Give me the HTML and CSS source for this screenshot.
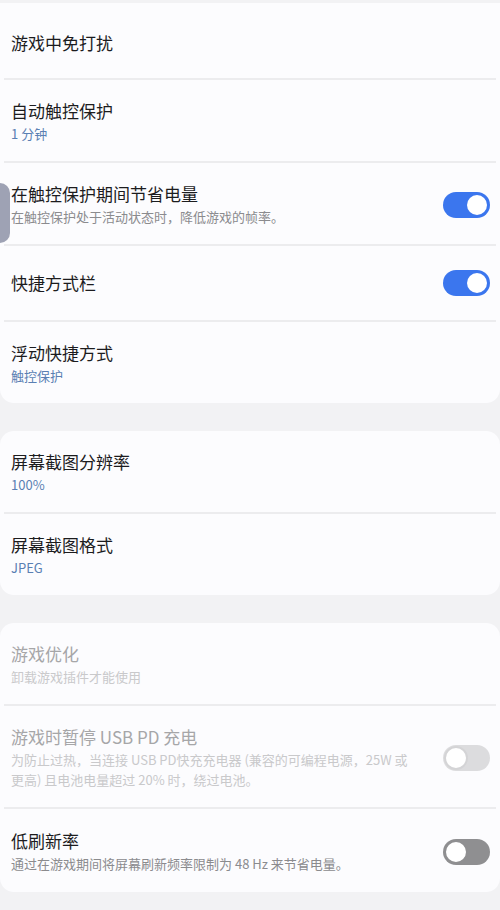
FILE: index.html
```html
<!DOCTYPE html>
<html lang="zh-CN">
<head>
    <meta charset="UTF-8">
    <title>游戏设置</title>
    <link rel="stylesheet" href="styles.css">
</head>
<body>
    <div class="edge-handle"></div>

    <div class="card first">
        <div class="row single top">
            <div class="text">
                <div class="title">游戏中免打扰</div>
            </div>
        </div>
        <div class="row">
            <div class="text">
                <div class="title">自动触控保护</div>
                <div class="sub value">1 分钟</div>
            </div>
        </div>
        <div class="row">
            <div class="text">
                <div class="title">在触控保护期间节省电量</div>
                <div class="sub">在触控保护处于活动状态时，降低游戏的帧率。</div>
            </div>
            <div class="switch on"><span class="knob"></span></div>
        </div>
        <div class="row single">
            <div class="text">
                <div class="title">快捷方式栏</div>
            </div>
            <div class="switch on"><span class="knob"></span></div>
        </div>
        <div class="row">
            <div class="text">
                <div class="title">浮动快捷方式</div>
                <div class="sub value">触控保护</div>
            </div>
        </div>
    </div>

    <div class="card">
        <div class="row">
            <div class="text">
                <div class="title">屏幕截图分辨率</div>
                <div class="sub value">100%</div>
            </div>
        </div>
        <div class="row">
            <div class="text">
                <div class="title">屏幕截图格式</div>
                <div class="sub value">JPEG</div>
            </div>
        </div>
    </div>

    <div class="card">
        <div class="row disabled">
            <div class="text">
                <div class="title">游戏优化</div>
                <div class="sub">卸载游戏插件才能使用</div>
            </div>
        </div>
        <div class="row disabled">
            <div class="text">
                <div class="title">游戏时暂停 USB PD 充电</div>
                <div class="sub">为防止过热，当连接 USB PD快充充电器 (兼容的可编程电源，25W 或更高) 且电池电量超过 20% 时，绕过电池。</div>
            </div>
            <div class="switch off"><span class="knob"></span></div>
        </div>
        <div class="row">
            <div class="text">
                <div class="title">低刷新率</div>
                <div class="sub">通过在游戏期间将屏幕刷新频率限制为 48 Hz 来节省电量。</div>
            </div>
            <div class="switch off"><span class="knob"></span></div>
        </div>
    </div>
</body>
</html>
```

FILE: styles.css
```css
body {
    margin: 0;
    padding: 3px 0 0;
    background: #f2f2f4;
    font-family: "Noto Sans CJK SC", "Noto Sans", sans-serif;
    color: #1c1c1e;
    position: relative;
}
.edge-handle {
    position: absolute;
    left: 0;
    top: 183px;
    width: 10px;
    height: 60px;
    background: #9ea2b4;
    border-radius: 0 10px 10px 0;
}
.card {
    background: #fcfcfe;
    border-radius: 14px;
    margin-bottom: 28px;
    padding: 0 4px;
}
.card.first {
    border-radius: 0 0 14px 14px;
}
.row {
    display: flex;
    align-items: center;
    padding: 19px 6px 17px 7px;
    border-bottom: 2px solid #ececee;
}
.row:last-child {
    border-bottom: none;
}
.row.single {
    padding-top: 24px;
    padding-bottom: 24px;
}
.row.single.top {
    padding-top: 28px;
    padding-bottom: 23px;
}
.card:last-child .row:last-child {
    padding-top: 20px;
    padding-bottom: 18px;
}
.text {
    flex: 1;
    padding-right: 30px;
}
.title {
    font-size: 17px;
    line-height: 24px;
}
.sub {
    font-size: 13px;
    line-height: 20px;
    margin-top: 1px;
    color: #8b8b8e;
}
.sub.value {
    color: #5a7fb3;
}
.disabled .title {
    color: #a6a6a8;
}
.disabled .sub {
    color: #c9c9cb;
}
.switch {
    width: 47px;
    height: 26px;
    border-radius: 13px;
    box-sizing: border-box;
    padding: 3px;
    display: flex;
    flex-shrink: 0;
}
.switch .knob {
    width: 20px;
    height: 20px;
    border-radius: 50%;
    background: #fff;
}
.switch.on {
    background: #3b76ee;
    justify-content: flex-end;
}
.switch.off {
    background: #8f8f91;
    padding: 1px;
}
.switch.off .knob {
    width: 20px;
    height: 20px;
    border: 2px solid #8f8f91;
}
.disabled .switch.off {
    background: #dcdcde;
}
.disabled .switch.off .knob {
    border-color: #d4d4d6;
}
```
